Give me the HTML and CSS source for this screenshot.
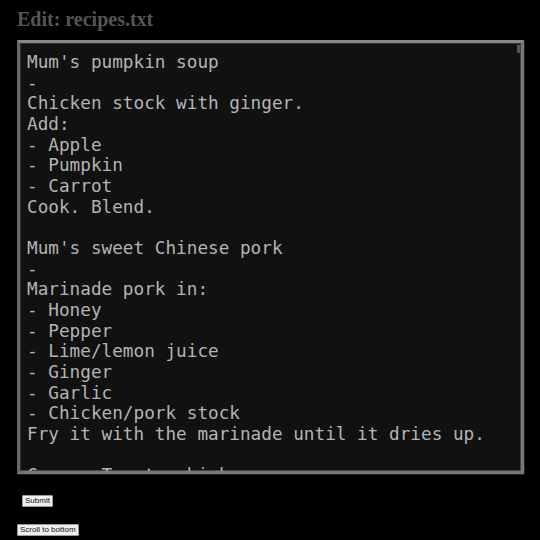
FILE: index.html
```html
<!DOCTYPE html>
<html>
<head>
<meta charset="utf-8">
<link rel="stylesheet" href="styles.css">
</head>
<body>
<h1 class="title">Edit: recipes.txt</h1>
<form class="editor">
<div class="area-wrap">
<textarea class="area" spellcheck="false">Mum's pumpkin soup
-
Chicken stock with ginger.
Add:
- Apple
- Pumpkin
- Carrot
Cook. Blend.

Mum's sweet Chinese pork
-
Marinade pork in:
- Honey
- Pepper
- Lime/lemon juice
- Ginger
- Garlic
- Chicken/pork stock
Fry it with the marinade until it dries up.

Creamy Tomato chicken
-
</textarea>
<span class="thumb"></span>
</div>
<div class="submit-row"><button type="button" class="btn">Submit</button></div>
</form>
<div class="scroll-row"><button type="button" class="btn">Scroll to bottom</button></div>
</body>
</html>
```

FILE: styles.css
```css
html, body {
  margin: 0;
  padding: 0;
  background: #000;
}
body {
  padding: 9px 16px 0 17px;
}
.title {
  margin: 0;
  font-family: "Liberation Serif", serif;
  font-weight: bold;
  font-size: 20px;
  line-height: 20px;
  color: #555;
}
.editor {
  margin: 11px 0 0 0;
}
.area-wrap {
  position: relative;
  width: 507px;
  height: 434px;
}
.area {
  display: block;
  box-sizing: border-box;
  width: 507px;
  height: 434px;
  margin: 0;
  padding: 9px 7px 8px 7px;
  background: #111;
  color: #b4b4b4;
  font-family: "DejaVu Sans Mono", monospace;
  font-size: 17.7px;
  line-height: 20.67px;
  border: 3px solid #777;
  border-top-color: #888;
  border-left-color: #666;
  box-shadow: inset 1px 1px 0 #333, inset -1px -1px 0 #444, 1px 1px 0 #222;
  resize: none;
  overflow: hidden;
  outline: none;
  white-space: pre;
}
.thumb {
  position: absolute;
  top: 5px;
  right: 4px;
  width: 3px;
  height: 8px;
  background: #555;
}
.submit-row {
  display: flex;
  margin: 21px 0 0 5px;
}
.scroll-row {
  display: flex;
  margin: 17px 0 0 0;
}
.btn {
  display: block;
  font-family: "Liberation Sans", Arial, sans-serif;
  font-size: 8px;
  line-height: 10px;
  padding: 0 2px;
  margin: 0;
  height: 12px;
  background: #efefef;
  color: #111;
  border: 1px solid #999;
  border-radius: 1px;
}
```
